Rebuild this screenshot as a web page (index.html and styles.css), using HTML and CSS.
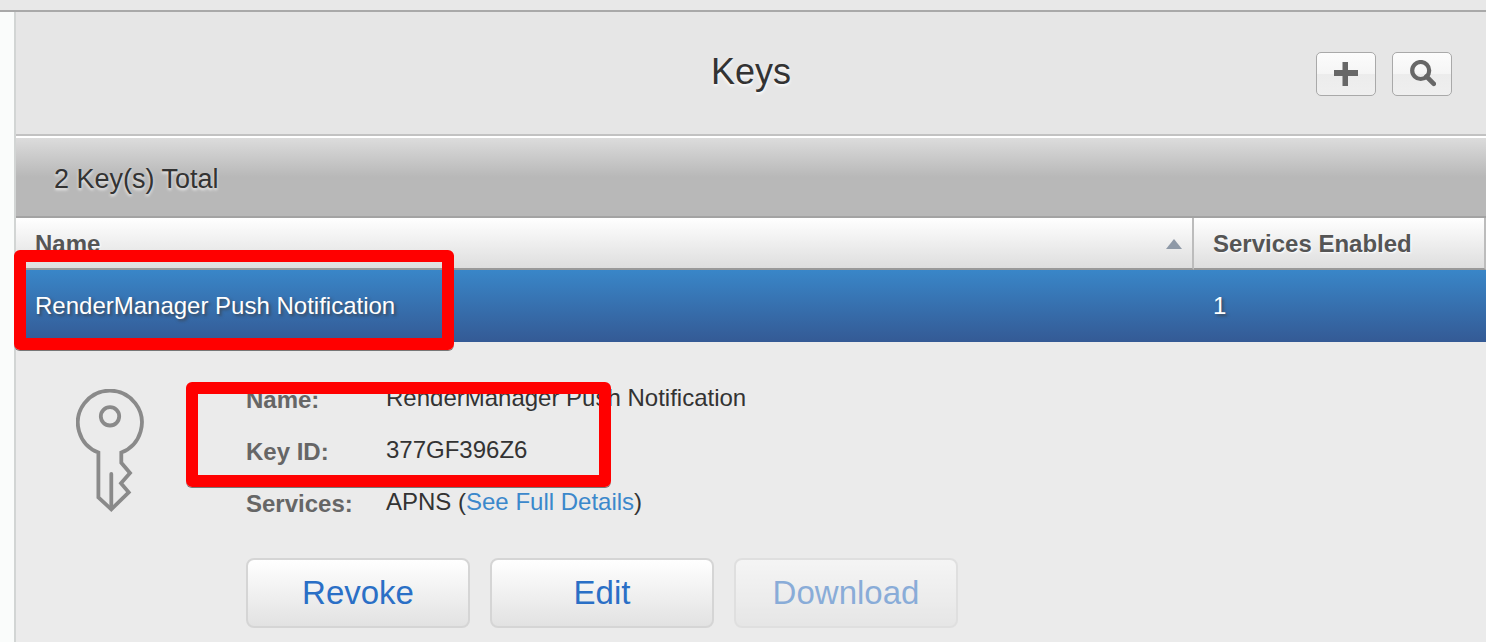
FILE: index.html
```html
<!DOCTYPE html>
<html lang="en">
<head>
<meta charset="utf-8">
<title>Keys</title>
<link rel="stylesheet" href="styles.css">
</head>
<body>
<div class="topbar"></div>
<div class="layout">
  <main class="main">
    <header class="header">
      <h1 class="title">Keys</h1>
      <div class="tools">
        <button class="tool" type="button" aria-label="Add key">
          <svg class="tool-icon" viewBox="0 0 28 28" aria-hidden="true"><path d="M10.5 2h5.5v8h10v6H16v10h-5.5V16H2v-6h8.5z"/></svg>
        </button>
        <button class="tool" type="button" aria-label="Search">
          <svg class="tool-icon" viewBox="0 0 28 28" aria-hidden="true"><g fill="none" stroke="#676767"><circle cx="12.7" cy="10.5" r="8.5" stroke-width="4.2"/><path d="M18.5 16.5l7.3 7.3" stroke-width="4.6" stroke-linecap="round"/></g></svg>
        </button>
      </div>
    </header>
    <div class="summary">2 Key(s) Total</div>
    <table class="keys">
      <thead>
        <tr>
          <th class="name-col" scope="col" aria-sort="ascending"><span class="sortable">Name <span class="sort-arrow"></span></span></th>
          <th class="services-col" scope="col">Services Enabled</th>
        </tr>
      </thead>
      <tbody>
        <tr class="selected">
          <td class="name-cell">RenderManager Push Notification<span class="mark mark-row"></span></td>
          <td>1</td>
        </tr>
      </tbody>
    </table>
    <section class="details" id="details">
      <svg class="key-icon" viewBox="0 0 68 124" fill="none" stroke="#8a8a8a" stroke-width="3.8" aria-hidden="true">
        <path d="M22.4 65V108.3L35.3 120.3L52.7 103.3L45 94.3L54 84L45.3 73.7V63.5A32 32 0 1 0 22.4 63.5V66"/>
        <circle cx="34" cy="27.3" r="9.2"/>
        <path d="M35.3 85V119" stroke-linecap="round"/>
      </svg>
      <div class="info">
        <dl class="fields">
          <dt>Name:</dt><dd>RenderManager Push Notification</dd>
          <dt>Key ID:</dt><dd>377GF396Z6</dd>
          <dt>Services:</dt><dd>APNS (<a class="link" href="#details">See Full Details</a>)</dd>
        </dl>
        <div class="actions">
          <button class="action" type="button">Revoke</button>
          <button class="action" type="button">Edit</button>
          <button class="action" type="button" disabled>Download</button>
        </div>
      </div>
      <span class="mark mark-fields"></span>
    </section>
  </main>
</div>
</body>
</html>
```
FILE: styles.css
```css
* {
  box-sizing: border-box;
}

body {
  display: flex;
  flex-direction: column;
  min-height: 100vh;
  margin: 0;
  background: #fafcfb;
  color: #333;
  font-family: "Liberation Sans", Arial, sans-serif;
  font-size: 24px;
  line-height: 28px;
}

.topbar {
  height: 12px;
  background: #e8e8e8;
  border-bottom: 2px solid #a9a9a9;
}

.layout {
  display: flex;
  flex: 1;
  padding-left: 14px;
}

.main {
  flex: 1;
  min-width: 0;
  background: #ebebeb;
  border-left: 2px solid #d2d5d4;
}

.header {
  display: grid;
  grid-template-columns: 1fr auto 1fr;
  align-items: center;
  padding: 40px 34px 38px;
  background: #e6e6e6;
  border-bottom: 2px solid #c2c2c2;
}

.title {
  grid-column: 2;
  margin: 0;
  padding-bottom: 4px;
  font-size: 36px;
  font-weight: 400;
  line-height: 40px;
  text-shadow: 0 2px 3px #fff;
}

.tools {
  display: flex;
  justify-content: flex-end;
  gap: 16px;
}

.tool {
  display: grid;
  place-items: center;
  width: 60px;
  height: 44px;
  padding: 0;
  background: linear-gradient(#fcfcfc, #f5f5f5 50%, #ececec 50%, #efefef);
  border: 1px solid #a9a9a9;
  border-radius: 5px;
}

.tool-icon {
  width: 28px;
  height: 28px;
  fill: #676767;
}

.summary {
  padding: 27px 38px 23px;
  background: linear-gradient(#dcdcdc, #b8b8b8 50%, #b8b8b8);
  border-top: 2px solid #fff;
  border-bottom: 2px solid #a3a3a3;
  font-size: 27px;
  text-shadow: 0 2px 3px #eee;
}

.keys {
  width: 100%;
  border-collapse: separate;
  border-spacing: 0;
  table-layout: fixed;
}

.keys th {
  height: 52px;
  padding: 1px 19px 0;
  background: linear-gradient(#fff, #dedede);
  border-right: 2px solid #bcbcbc;
  border-bottom: 2px solid #999;
  color: #555;
  text-align: left;
  text-shadow: 1px 1px 2px #fff;
}

.keys .name-col {
  padding-right: 10px;
}

.services-col {
  width: 292px;
}

.sortable {
  display: flex;
  justify-content: space-between;
  align-items: center;
}

.sort-arrow {
  border: 8px solid transparent;
  border-top: 0;
  border-bottom: 10px solid #8e99a7;
}

.keys td {
  height: 72px;
  padding: 0 19px;
  color: #fff;
  text-shadow: 2px 2px 3px rgba(60, 60, 60, 0.7);
}

.selected {
  background: linear-gradient(#3986c8, #345a95);
}

.keys .name-cell {
  position: relative;
}

.details {
  position: relative;
  display: flex;
  gap: 102px;
  padding: 42px 60px 14px;
}

.key-icon {
  flex: none;
  width: 68px;
  height: 124px;
  margin-top: 5px;
}

.info {
  flex: 1;
}

.fields {
  display: grid;
  grid-template-columns: 140px 1fr;
  row-gap: 22px;
  margin: 0 0 40px;
}

.fields dt {
  padding-top: 2px;
  color: #666;
  font-weight: 700;
}

.fields dd {
  margin: 0;
}

.link {
  color: #3b88cb;
  text-decoration: none;
}

.actions {
  display: flex;
  gap: 20px;
}

.action {
  width: 224px;
  height: 70px;
  padding: 0;
  background: linear-gradient(#fff, #e2e2e2);
  border: 2px solid #d5d5d5;
  border-radius: 8px;
  color: #2a6fc6;
  font-family: inherit;
  font-size: 33px;
}

.action:disabled {
  opacity: 0.5;
}

/* Highlight frames laid over the key row and its fields */
.mark {
  position: absolute;
  border: 12px solid #f00;
  border-radius: 6px;
  box-shadow: 0 1px 0 #777;
  pointer-events: none;
}

.mark-row {
  top: -20px;
  left: -2px;
  width: 440px;
  height: 100px;
}

.mark-fields {
  top: 40px;
  left: 170px;
  width: 425px;
  height: 105px;
}
```
